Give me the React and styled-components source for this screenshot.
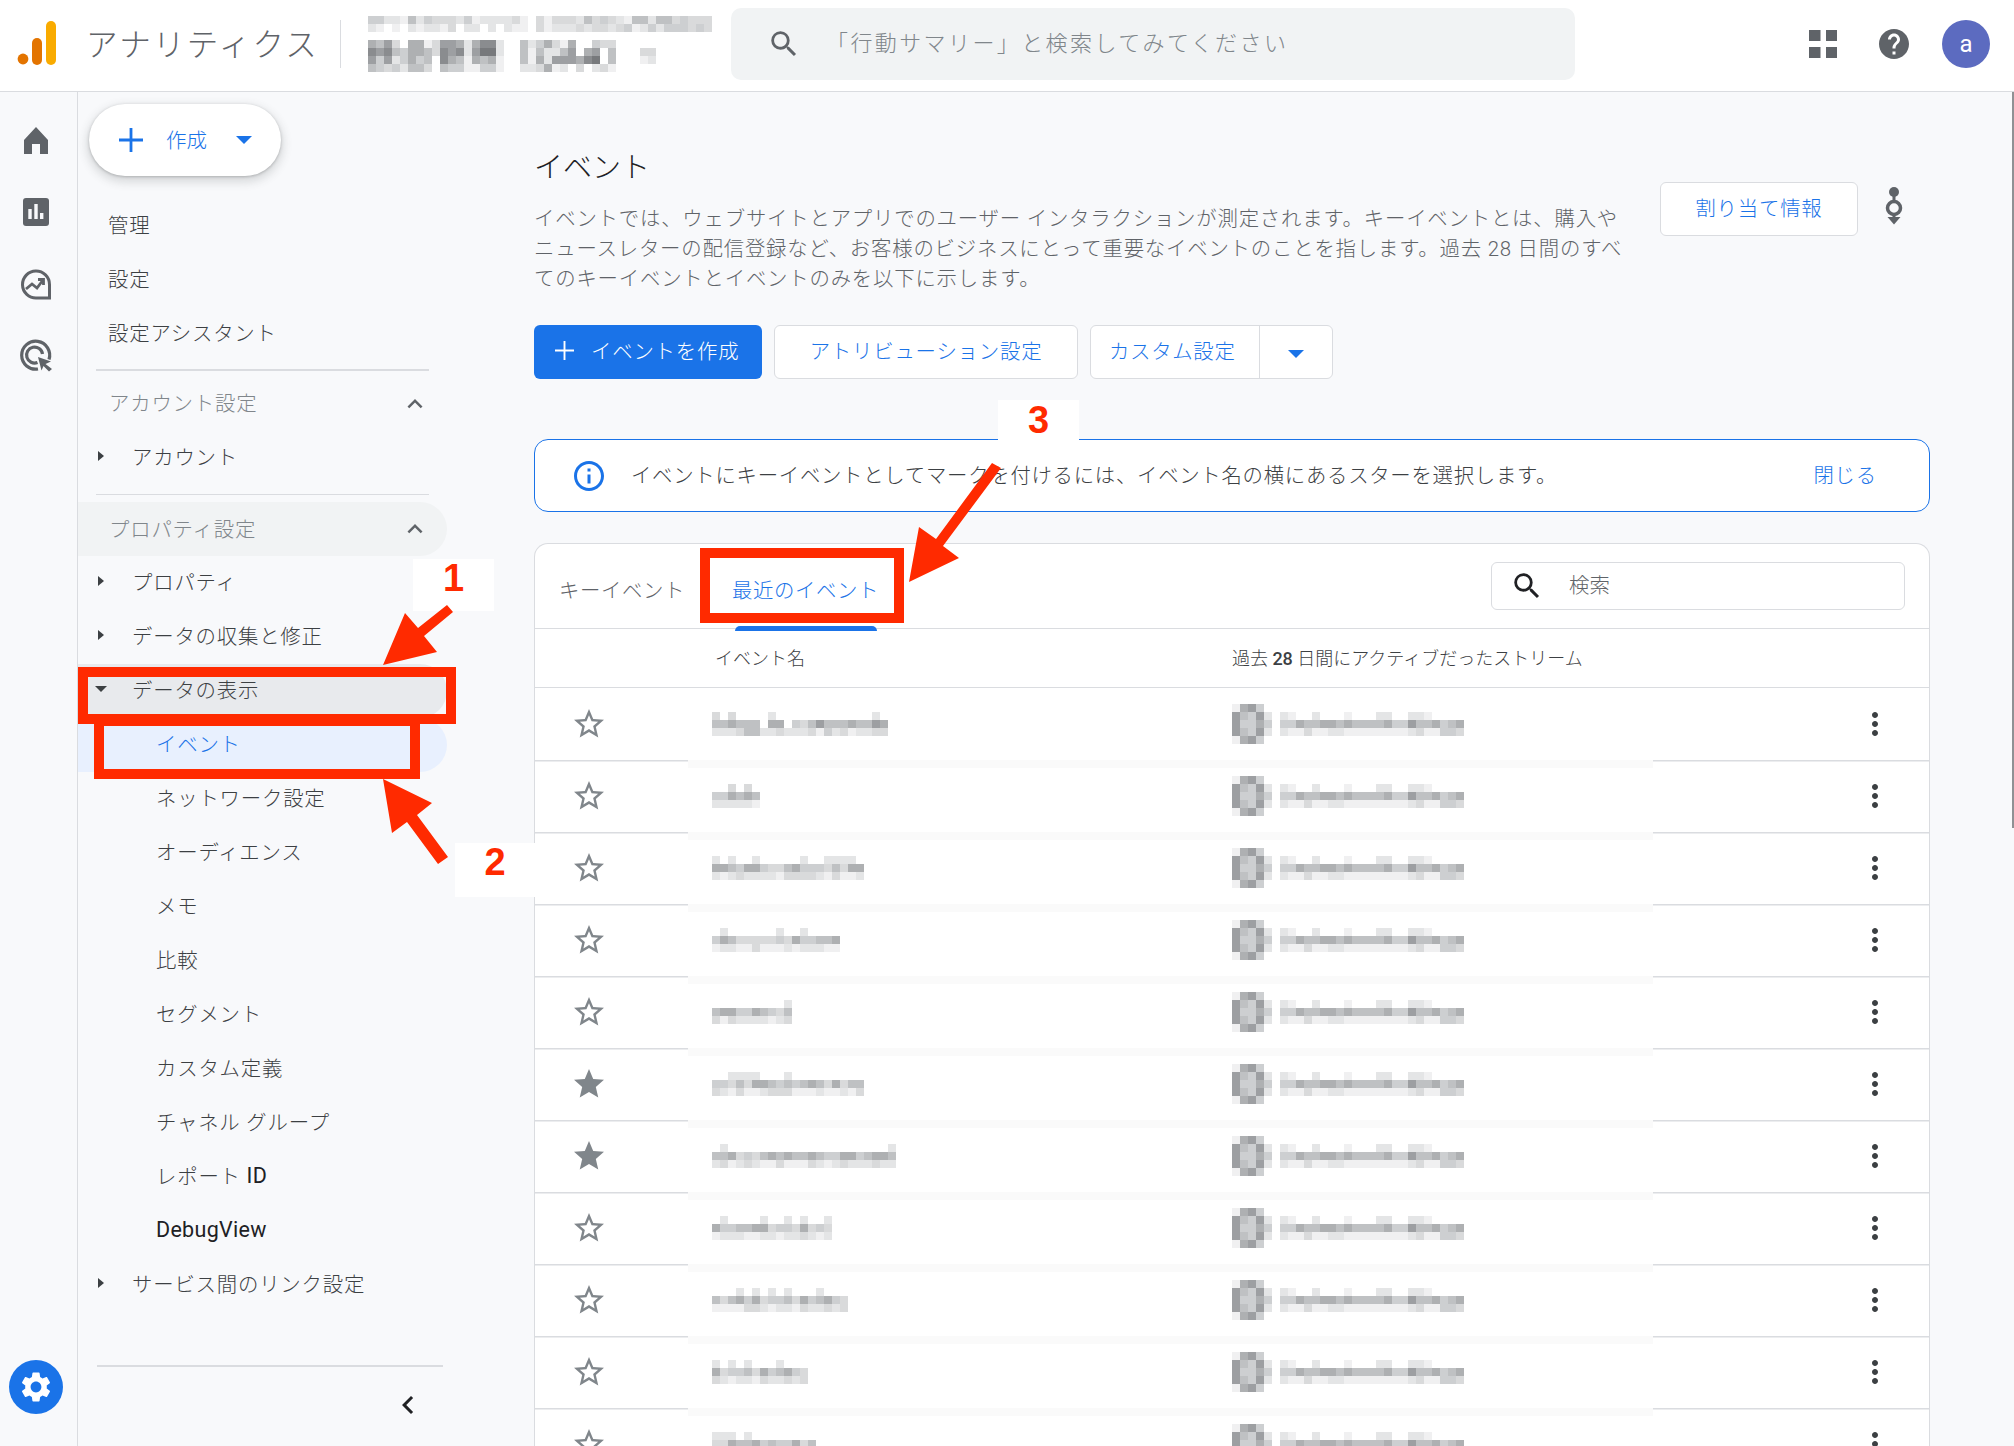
import React from "react";
import styled, { createGlobalStyle } from "styled-components";

const GlobalStyle = createGlobalStyle`
  html, body {
    margin: 0;
    padding: 0;
    background: #f8f9fb;
  }
  body {
    font-family: Roboto, "Noto Sans CJK JP", sans-serif;
    font-weight: 300;
    color: #3c4043;
  }
`;

const GREYS = ["#ffffff", "#f0f0f1", "#e4e5e6", "#d9dadb", "#cdcfd1", "#bfc1c3", "#aeb0b2", "#9d9fa2", "#8a8c8f", "#77797c"];

const Mosaic = ({ rows }) => (
  <MosaicSvg width={rows[0].length * 8} height={rows.length * 8} shapeRendering="crispEdges">
    {rows.map((row, y) =>
      row.split("").map((cell, x) => (
        <rect key={`${x}-${y}`} x={x * 8} y={y * 8} width="8" height="8" fill={GREYS[Number(cell)]} />
      ))
    )}
  </MosaicSvg>
);

const makeNameRows = (cols, seed) => {
  let n = seed;
  const next = () => {
    n = (n * 137 + 59) % 251;
    return n;
  };
  let top = "";
  let mid = "";
  let bottom = "";
  for (let i = 0; i < cols; i++) {
    top += next() % 5 === 0 ? "2" : "0";
    mid += String(3 + (next() % 4));
    bottom += String(1 + (next() % 3));
  }
  return [top, mid, bottom];
};

const STREAM_ROWS = ["21002000100022002210000", "44655665655556447556456", "21131122111111112311443"];
const STREAM_ICON = ["16740", "75472", "74464", "75472", "16740"];
const ACCOUNT_TOP = [
  "4422152433324122223103133325343215525534333",
  "2101021221302202021103122232332341242444343",
  "0000000000000000000000000000000000000000000",
];
const ACCOUNT_BOTTOM = [
  "657306613776268820052463160043300000000",
  "878546653878279920051522570670500033000",
  "747246450865165610051627776890500012000",
  "543425530544114410022361203023100000000",
];

const EVENTS = [
  { rows: ["3030000200000000000020", "5565550660435755565576", "2223552232223142312233"] },
  { rows: ["003030", "446565", "222221"] },
  { rows: makeNameRows(19, 11) },
  { rows: makeNameRows(16, 23) },
  { rows: makeNameRows(10, 37) },
  { rows: makeNameRows(19, 41), starred: true },
  { rows: makeNameRows(23, 53), starred: true },
  { rows: makeNameRows(15, 67) },
  { rows: makeNameRows(17, 71) },
  { rows: makeNameRows(12, 83) },
  { rows: makeNameRows(13, 97) },
];

const SearchPath = "M15.5 14h-.79l-.28-.27A6.471 6.471 0 0 0 16 9.5 6.5 6.5 0 1 0 9.5 16c1.61 0 3.09-.59 4.23-1.57l.27.28v.79l5 4.99L20.49 19l-4.99-5zm-6 0C7.01 14 5 11.99 5 9.5S7.01 5 9.5 5 14 7.01 14 9.5 11.99 14 9.5 14z";

const Icon = ({ size = 36, color = "#5f6368", d }) => (
  <svg width={size} height={size} viewBox="0 0 24 24" fill={color}>
    <path d={d} />
  </svg>
);

const Plus = ({ size, color, weight }) => (
  <svg width={size} height={size} viewBox="0 0 24 24" stroke={color} strokeWidth={weight}>
    <path d="M12 0v24M0 12h24" />
  </svg>
);

const RailIcon = ({ children }) => (
  <svg width="36" height="36" viewBox="0 0 36 36" fill="#5f6368">
    {children}
  </svg>
);

const App = () => {
  return (
    <Root>
      <GlobalStyle />
      <TopBar>
        <Logo width="40" height="46" viewBox="0 0 40 46">
          <circle cx="7" cy="38" r="5.4" fill="#e37400" />
          <rect x="16" y="17" width="10" height="27" rx="5" fill="#e37400" />
          <rect x="30" y="0" width="10" height="44" rx="5" fill="#f9ab00" />
        </Logo>
        <ProductName>アナリティクス</ProductName>
        <TopDivider />
        <AccountBlock>
          <Mosaic rows={ACCOUNT_TOP} />
          <Mosaic rows={ACCOUNT_BOTTOM} />
        </AccountBlock>
        <TopSearch>
          <Icon size={34} d={SearchPath} />
          <TopSearchText>「行動サマリー」と検索してみてください</TopSearchText>
        </TopSearch>
        <TopActions>
          <AppsGlyph width="36" height="36" viewBox="0 0 36 36" fill="#5f6368">
            <rect x="4" y="4" width="11.500" height="11" />
            <rect x="21" y="4" width="11" height="11" />
            <rect x="4" y="21" width="11.500" height="11" />
            <rect x="21" y="21" width="11" height="11" />
          </AppsGlyph>
          <Icon d="M12 2C6.48 2 2 6.48 2 12s4.48 10 10 10 10-4.48 10-10S17.52 2 12 2zm1 17h-2v-2h2v2zm2.07-7.75l-.9.92C13.45 12.9 13 13.5 13 15h-2v-.5c0-1.1.45-2.1 1.17-2.83l1.24-1.26c.37-.36.59-.86.59-1.41 0-1.1-.9-2-2-2s-2 .9-2 2H8c0-2.21 1.79-4 4-4s4 1.79 4 4c0 .88-.36 1.68-.93 2.25z" />
          <Avatar>a</Avatar>
        </TopActions>
      </TopBar>

      <Body>
        <Rail>
          <RailSlot>
            <RailIcon>
              <path d="M18 5l12 13v14h-8V22h-8v10H6V18z" />
            </RailIcon>
          </RailSlot>
          <RailSlot>
            <RailIcon>
              <rect x="5" y="4" width="26" height="28" rx="3" />
              <rect x="10.3" y="15" width="3.4" height="10" fill="#f8f9fb" />
              <rect x="16.3" y="10" width="3.4" height="15" fill="#f8f9fb" />
              <rect x="22" y="19" width="3.4" height="6" fill="#f8f9fb" />
            </RailIcon>
          </RailSlot>
          <RailSlot>
            <RailIcon>
              <path d="M31.500 18.500V32H18.500A13.500 13.500 0 1 1 31.500 18.500z" fill="none" stroke="#5f6368" strokeWidth="3" />
              <path d="M8 23l6-5 5 4 6-8M20 13.500h5.500V19" fill="none" stroke="#5f6368" strokeWidth="2.800" />
            </RailIcon>
          </RailSlot>
          <RailSlot>
            <RailIcon>
              <path d="M31 21.500A14 14 0 1 0 20 31" fill="none" stroke="#5f6368" strokeWidth="3.200" />
              <path d="M24.500 16A8 8 0 1 0 19.500 24.500" fill="none" stroke="#5f6368" strokeWidth="3.200" />
              <path d="M20 19l13 4.500-5.500 2.500 6.500 5-3 2.500-5.500-5.500-2 4.500z" />
            </RailIcon>
          </RailSlot>
          <GearButton>
            <Icon size={36} color="#fff" d="M19.14 12.94c.04-.3.06-.61.06-.94 0-.32-.02-.64-.07-.94l2.03-1.58c.18-.14.23-.41.12-.61l-1.92-3.32c-.12-.22-.37-.29-.59-.22l-2.39.96c-.5-.38-1.03-.7-1.62-.94l-.36-2.54c-.04-.24-.24-.41-.48-.41h-3.84c-.24 0-.43.17-.47.41l-.36 2.54c-.59.24-1.13.57-1.62.94l-2.39-.96c-.22-.08-.47 0-.59.22L2.74 8.87c-.12.21-.08.47.12.61l2.03 1.58c-.05.3-.09.63-.09.94s.02.64.07.94l-2.03 1.58c-.18.14-.23.41-.12.61l1.92 3.32c.12.22.37.29.59.22l2.39-.96c.5.38 1.03.7 1.62.94l.36 2.54c.05.24.24.41.48.41h3.84c.24 0 .44-.17.47-.41l.36-2.54c.59-.24 1.13-.56 1.62-.94l2.39.96c.22.08.47 0 .59-.22l1.92-3.32c.12-.22.07-.47-.12-.61l-2.01-1.58zM12 15.6c-1.98 0-3.6-1.62-3.6-3.6s1.62-3.6 3.6-3.6 3.6 1.62 3.6 3.6-1.62 3.6-3.6 3.6z" />
          </GearButton>
        </Rail>

        <Sidebar>
          <CreateButton>
            <Plus size={24} color="#1a73e8" weight={2.8} />
            <CreateLabel>作成</CreateLabel>
            <BlueCaret />
          </CreateButton>

          <NavItem $indent={30}>管理</NavItem>
          <NavItem $indent={30}>設定</NavItem>
          <NavItem $indent={30}>設定アシスタント</NavItem>

          <NavDivider $top={8} $bottom={6} />
          <SectionHead>
            <SectionLabel>アカウント設定</SectionLabel>
            <Chevron size={30} />
          </SectionHead>
          <NavItem>
            <CaretSlot>
              <CaretRight />
            </CaretSlot>
            アカウント
          </NavItem>

          <NavDivider $top={9} $bottom={7} />
          <SectionHead $shaded>
            <SectionLabel>プロパティ設定</SectionLabel>
            <Chevron size={30} />
          </SectionHead>
          <NavItem>
            <CaretSlot>
              <CaretRight />
            </CaretSlot>
            プロパティ
          </NavItem>
          <NavItem>
            <CaretSlot>
              <CaretRight />
            </CaretSlot>
            データの収集と修正
          </NavItem>
          <NavItem $tone="open">
            <CaretSlot>
              <CaretDown />
            </CaretSlot>
            データの表示
          </NavItem>
          <NavItem $indent={78} $tone="active">イベント</NavItem>
          <NavItem $indent={78}>ネットワーク設定</NavItem>
          <NavItem $indent={78}>オーディエンス</NavItem>
          <NavItem $indent={78}>メモ</NavItem>
          <NavItem $indent={78}>比較</NavItem>
          <NavItem $indent={78}>セグメント</NavItem>
          <NavItem $indent={78}>カスタム定義</NavItem>
          <NavItem $indent={78}>チャネル グループ</NavItem>
          <NavItem $indent={78}>
            レポート <LatinStrong>ID</LatinStrong>
          </NavItem>
          <NavItem $indent={78}>
            <LatinStrong>DebugView</LatinStrong>
          </NavItem>
          <NavItem>
            <CaretSlot>
              <CaretRight />
            </CaretSlot>
            サービス間のリンク設定
          </NavItem>

          <FootDivider />
          <CollapseRow>
            <Icon color="#202124" d="M15.41 7.41L14 6l-6 6 6 6 1.41-1.41L10.83 12z" />
          </CollapseRow>
        </Sidebar>

        <Main>
          <Intro>
            <IntroText>
              <PageTitle>イベント</PageTitle>
              <Description>
                イベントでは、ウェブサイトとアプリでのユーザー インタラクションが測定されます。キーイベントとは、購入や
                <br />
                ニュースレターの配信登録など、お客様のビジネスにとって重要なイベントのことを指します。過去 28 日間のすべ
                <br />
                てのキーイベントとイベントのみを以下に示します。
              </Description>
            </IntroText>
            <IntroSide>
              <OutlineButton $width={198}>割り当て情報</OutlineButton>
              <svg width="36" height="44" viewBox="0 0 36 44" fill="#5f6368">
                <circle cx="18" cy="5" r="5" />
                <rect x="16.500" y="8" width="3" height="24" />
                <circle cx="18" cy="21" r="6.500" fill="#f8f9fb" stroke="#5f6368" strokeWidth="3.500" />
                <path d="M11.500 30h13L18 37.500z" />
              </svg>
            </IntroSide>
          </Intro>

          <ButtonRow>
            <PrimaryButton>
              <Plus size={19} color="#fff" weight={2.400} />
              イベントを作成
            </PrimaryButton>
            <OutlineButton $width={304}>アトリビューション設定</OutlineButton>
            <SplitButton>
              <SplitLabel>カスタム設定</SplitLabel>
              <SplitArrow>
                <BlueCaret />
              </SplitArrow>
            </SplitButton>
          </ButtonRow>

          <Notice>
            <Icon color="#1a73e8" d="M11 7h2v2h-2zm0 4h2v6h-2zm1-9C6.48 2 2 6.48 2 12s4.48 10 10 10 10-4.48 10-10S17.52 2 12 2zm0 18c-4.41 0-8-3.59-8-8s3.59-8 8-8 8 3.59 8 8-3.59 8-8 8z" />
            <NoticeText>イベントにキーイベントとしてマークを付けるには、イベント名の横にあるスターを選択します。</NoticeText>
            <NoticeLink>閉じる</NoticeLink>
          </Notice>

          <Card>
            <TabBar>
              <Tab>キーイベント</Tab>
              <Tab $active>最近のイベント</Tab>
              <TableSearch>
                <Icon size={34} color="#202124" d={SearchPath} />
                <TableSearchText>検索</TableSearchText>
              </TableSearch>
            </TabBar>
            <TableHead>
              <HeadName>イベント名</HeadName>
              <HeadStream>
                過去 <b>28</b> 日間にアクティブだったストリーム
              </HeadStream>
            </TableHead>
            {EVENTS.map((event, index) => (
              <EventRow key={index}>
                <StarCell $line={index > 0}>
                  <Icon
                    color="#80868b"
                    d={
                      event.starred
                        ? "M12 17.27 18.18 21l-1.64-7.03L22 9.24l-7.19-.61L12 2 9.19 8.63 2 9.24l5.46 4.73L5.82 21z"
                        : "M22 9.24l-7.19-.62L12 2 9.19 8.63 2 9.24l5.46 4.73L5.82 21 12 17.27 18.18 21l-1.63-7.03L22 9.24zM12 15.4l-3.76 2.27 1-4.28-3.32-2.88 4.38-.38L12 6.1l1.71 4.04 4.38.38-3.32 2.88 1 4.28L12 15.4z"
                    }
                  />
                </StarCell>
                <DataCell $band={index > 0}>
                  <NameSlot>
                    <Mosaic rows={event.rows} />
                  </NameSlot>
                  <Mosaic rows={STREAM_ICON} />
                  <Mosaic rows={STREAM_ROWS} />
                </DataCell>
                <MenuCell $line={index > 0}>
                  <Icon color="#3c4043" d="M12 8c1.1 0 2-.9 2-2s-.9-2-2-2-2 .9-2 2 .9 2 2 2zm0 2c-1.1 0-2 .9-2 2s.9 2 2 2 2-.9 2-2-.9-2-2-2zm0 6c-1.1 0-2 .9-2 2s.9 2 2 2 2-.9 2-2-.9-2-2-2z" />
                </MenuCell>
              </EventRow>
            ))}
          </Card>
        </Main>
      </Body>

      <ScrollThumb />

      {/* red annotations drawn over the screenshot */}
      <CalloutLabel $x={413} $y={559} $w={81} $h={52}>1</CalloutLabel>
      <CalloutLabel $x={455} $y={843} $w={80} $h={54}>2</CalloutLabel>
      <CalloutLabel $x={998} $y={400} $w={81} $h={41} $pad={1}>3</CalloutLabel>
      <RedFrame $x={94} $y={716} $w={326} $h={63} />
      <RedFrame $x={78} $y={667} $w={378} $h={57} />
      <RedFrame $x={700} $y={548} $w={204} $h={75} />
      <ArrowLayer width="2014" height="1446" viewBox="0 0 2014 1446" fill="#ff2a00">
        <polygon points="447,605 453,612 424,636 437,652 383,665 405,613 418,628" />
        <polygon points="448,857 438,864 407,822 392,833 383,779 432,803 417,815" />
        <polygon points="992,463 1001,468 943,546 959,558 909,582 919,527 936,539" />
      </ArrowLayer>
    </Root>
  );
};

const Chevron = ({ size }) => <Icon size={size} d="M12 8l-6 6 1.41 1.41L12 10.83l4.59 4.58L18 14z" />;

const Root = styled.div`
  position: relative;
  width: 2014px;
  height: 1446px;
  overflow: hidden;
  background: #f8f9fb;
`;

const TopBar = styled.header`
  display: flex;
  align-items: center;
  box-sizing: border-box;
  height: 92px;
  padding: 0 0 3.500px 16px;
  background: #fff;
  border-bottom: 1.5px solid #dadce0;
`;

const Logo = styled.svg`
  flex: none;
  margin-right: 30px;
`;

const ProductName = styled.div`
  width: 254px;
  padding-bottom: 3px;
  font-size: 31.500px;
  letter-spacing: 2.300px;
  color: #5f6368;
  white-space: nowrap;
`;

const TopDivider = styled.div`
  width: 1px;
  height: 48px;
  background: #dadce0;
`;

const AccountBlock = styled.div`
  display: flex;
  flex-direction: column;
  width: 363px;
  margin-left: 27px;
  gap: 0;
`;

const MosaicSvg = styled.svg`
  display: block;
  flex: none;
`;

const TopSearch = styled.div`
  display: flex;
  align-items: center;
  box-sizing: border-box;
  width: 844px;
  height: 72px;
  padding-left: 36px;
  background: #f1f3f4;
  border-radius: 10px;
`;

const TopSearchText = styled.span`
  margin-left: 25px;
  padding-bottom: 6px;
  font-size: 22px;
  letter-spacing: 2.400px;
  color: #80868b;
`;

const TopActions = styled.div`
  display: flex;
  align-items: center;
  gap: 30px;
  margin-left: auto;
  padding-right: 24px;
`;

const AppsGlyph = styled.svg`
  margin-right: 5px;
`;

const Avatar = styled.div`
  display: flex;
  align-items: center;
  justify-content: center;
  width: 48px;
  height: 48px;
  border-radius: 50%;
  background: #5c6bc0;
  color: #fff;
  font-size: 24px;
  font-weight: 400;
`;

const Body = styled.div`
  display: flex;
  height: 1354px;
`;

const Rail = styled.nav`
  display: flex;
  flex-direction: column;
  align-items: center;
  flex: none;
  box-sizing: border-box;
  width: 78px;
  padding: 12px 6px 32px 0;
  border-right: 1.5px solid #dadce0;
`;

const RailSlot = styled.div`
  display: flex;
  align-items: center;
  justify-content: center;
  height: 72px;
`;

const GearButton = styled.div`
  display: flex;
  align-items: center;
  justify-content: center;
  width: 54px;
  height: 54px;
  margin-top: auto;
  border-radius: 50%;
  background: #1a73e8;
`;

const Sidebar = styled.aside`
  flex: none;
  width: 456px;
`;

const CreateButton = styled.button`
  display: flex;
  align-items: center;
  box-sizing: border-box;
  width: 192px;
  height: 72px;
  margin: 12px 0 23px 11px;
  padding: 0 0 0 30px;
  border: none;
  border-radius: 36px;
  background: #fff;
  box-shadow: 0 4px 8px 3px rgba(60, 64, 67, 0.15), 0 1px 3px rgba(60, 64, 67, 0.3);
  font-family: inherit;
  font-weight: 300;
`;

const CreateLabel = styled.span`
  margin: 0 29px 3px 23px;
  font-size: 20.500px;
  color: #1a73e8;
`;

const BlueCaret = styled.i`
  display: block;
  border-left: 8px solid transparent;
  border-right: 8px solid transparent;
  border-top: 8px solid #1a73e8;
`;

const NavItem = styled.div`
  display: flex;
  align-items: center;
  box-sizing: border-box;
  width: 369px;
  height: 54px;
  padding-left: ${(p) => p.$indent || 0}px;
  padding-bottom: 4px;
  border-radius: 0 27px 27px 0;
  font-size: 20.400px;
  letter-spacing: 0.8px;
  white-space: pre;
  color: ${(p) => (p.$tone === "active" ? "#1a73e8" : "#3c4043")};
  background: ${(p) =>
    p.$tone === "active" ? "#e8f0fe" : p.$tone === "open" ? "#e8eaed" : "transparent"};
`;

const LatinStrong = styled.span`
  font-size: 21.500px;
  font-weight: 400;
  letter-spacing: 0.3px;
  color: #202124;
`;

const CaretSlot = styled.span`
  display: flex;
  justify-content: center;
  flex: none;
  width: 46px;
  margin-right: 8px;
`;

const CaretRight = styled.i`
  display: block;
  border-top: 5.5px solid transparent;
  border-bottom: 5.5px solid transparent;
  border-left: 6px solid #3c4043;
`;

const CaretDown = styled.i`
  display: block;
  border-left: 6px solid transparent;
  border-right: 6px solid transparent;
  border-top: 6px solid #3c4043;
`;

const NavDivider = styled.div`
  width: 333px;
  height: 1.5px;
  margin: ${(p) => p.$top}px 0 ${(p) => p.$bottom}px 18px;
  background: #dadce0;
`;

const SectionHead = styled.div`
  display: flex;
  align-items: center;
  justify-content: space-between;
  box-sizing: border-box;
  width: 369px;
  height: 54px;
  padding: 0 17px 0 31px;
  border-radius: 0 27px 27px 0;
  font-size: 20.400px;
  letter-spacing: 0.8px;
  color: #80868b;
  background: ${(p) => (p.$shaded ? "#f1f3f4" : "transparent")};
`;

const SectionLabel = styled.span`
  padding-bottom: 3px;
`;

const FootDivider = styled.div`
  width: 346px;
  height: 1.5px;
  margin: 53px 0 0 19px;
  background: #dadce0;
`;

const CollapseRow = styled.div`
  display: flex;
  justify-content: flex-end;
  width: 348px;
  margin-top: 20px;
`;

const Main = styled.main`
  flex: none;
  width: 1396px;
  padding-top: 58px;
`;

const Intro = styled.section`
  display: flex;
`;

const IntroText = styled.div`
  width: 1126px;
`;

const PageTitle = styled.h1`
  margin: 0 0 18px;
  font-size: 29px;
  line-height: 36px;
  font-weight: 300;
  color: #202124;
`;

const Description = styled.p`
  margin: 0;
  font-size: 20.400px;
  line-height: 30px;
  letter-spacing: 0.8px;
  white-space: nowrap;
  color: #5f6368;
`;

const IntroSide = styled.div`
  display: flex;
  align-items: center;
  gap: 18px;
  height: 54px;
  margin-top: 32px;
`;

const OutlineButton = styled.button`
  flex: none;
  box-sizing: border-box;
  width: ${(p) => p.$width}px;
  height: 54px;
  padding: 0 0 5px;
  border: 1.5px solid #dadce0;
  border-radius: 6px;
  background: #fff;
  font-family: inherit;
  font-weight: 300;
  font-size: 20.400px;
  letter-spacing: 0.8px;
  color: #1a73e8;
`;

const ButtonRow = styled.div`
  display: flex;
  gap: 12px;
  margin-top: 31px;
`;

const PrimaryButton = styled.button`
  display: flex;
  align-items: center;
  gap: 17px;
  box-sizing: border-box;
  width: 228px;
  height: 54px;
  padding: 0 0 4px 21px;
  border: none;
  border-radius: 6px;
  background: #1a73e8;
  font-family: inherit;
  font-weight: 300;
  font-size: 20.400px;
  letter-spacing: 0.8px;
  color: #fff;
`;

const SplitButton = styled.div`
  display: flex;
  box-sizing: border-box;
  width: 243px;
  height: 54px;
  border: 1.5px solid #dadce0;
  border-radius: 6px;
  background: #fff;
`;

const SplitLabel = styled.span`
  display: flex;
  align-items: center;
  box-sizing: border-box;
  width: 169px;
  padding: 0 0 5px 18px;
  border-right: 1px solid #dadce0;
  font-size: 20.400px;
  letter-spacing: 0.7px;
  color: #1a73e8;
`;

const SplitArrow = styled.span`
  display: flex;
  flex: 1;
  align-items: center;
  justify-content: center;
  padding-top: 4px;
`;

const Notice = styled.div`
  display: flex;
  align-items: center;
  box-sizing: border-box;
  height: 73px;
  margin-top: 60px;
  padding: 0 52px 0 36px;
  border: 1.5px solid #1a73e8;
  border-radius: 14px;
  background: #fff;
`;

const NoticeText = styled.span`
  margin: 0 0 4px 24px;
  font-size: 20.400px;
  letter-spacing: 0.72px;
  color: #3c4043;
`;

const NoticeLink = styled.span`
  margin: 0 0 4px auto;
  font-size: 20.400px;
  letter-spacing: 0.8px;
  color: #1a73e8;
`;

const Card = styled.section`
  margin-top: 31px;
  border: 1.5px solid #dadce0;
  border-bottom: none;
  border-radius: 14px 14px 0 0;
  background: #fff;
`;

const TabBar = styled.div`
  display: flex;
  align-items: center;
  box-sizing: border-box;
  height: 85px;
  padding: 0 24px 0 24px;
  gap: 47px;
  border-bottom: 1.5px solid #dadce0;
`;

const Tab = styled.div`
  position: relative;
  padding-top: 6px;
  font-size: 20.400px;
  letter-spacing: 0.6px;
  color: ${(p) => (p.$active ? "#1a73e8" : "#5f6368")};

  ${(p) =>
    p.$active &&
    `&::after {
      content: "";
      position: absolute;
      left: 3px;
      right: 2px;
      bottom: -26.500px;
      height: 5px;
      border-radius: 5px 5px 0 0;
      background: #1a73e8;
    }`}
`;

const TableSearch = styled.div`
  display: flex;
  align-items: center;
  box-sizing: border-box;
  width: 414px;
  height: 48px;
  margin-left: auto;
  padding-left: 18px;
  border: 1.5px solid #dadce0;
  border-radius: 6px;
`;

const TableSearchText = styled.span`
  margin: 0 0 4px 25px;
  font-size: 20.400px;
  color: #5f6368;
`;

const TableHead = styled.div`
  display: flex;
  align-items: center;
  box-sizing: border-box;
  height: 59px;
  padding: 0 0 2px 180px;
  border-bottom: 1.5px solid #dadce0;
  font-size: 18px;
  color: #3c4043;
`;

const HeadName = styled.span`
  width: 517px;
`;

const HeadStream = styled.span`
  b {
    font-weight: 500;
  }
`;

const EventRow = styled.div`
  display: flex;
  height: 72px;
`;

const StarCell = styled.div`
  display: flex;
  align-items: center;
  flex: none;
  box-sizing: border-box;
  width: 153px;
  padding-left: 36px;
  box-shadow: ${(p) => (p.$line ? "inset 0 1.5px 0 #dadce0" : "none")};
`;

const DataCell = styled.div`
  display: flex;
  align-items: center;
  gap: 8px;
  flex: none;
  width: 965px;
  box-shadow: ${(p) => (p.$band ? "inset 0 8px 0 #fafafa" : "none")};
`;

const NameSlot = styled.div`
  flex: none;
  box-sizing: border-box;
  width: 536px;
  padding-left: 24px;
`;

const MenuCell = styled.div`
  display: flex;
  align-items: center;
  flex: 1;
  padding-left: 204px;
  box-shadow: ${(p) => (p.$line ? "inset 0 1.5px 0 #dadce0" : "none")};
`;

const ScrollThumb = styled.div`
  position: absolute;
  top: 92px;
  right: 0;
  width: 2px;
  height: 736px;
  background: #8f9194;
`;

const CalloutLabel = styled.div`
  position: absolute;
  left: ${(p) => p.$x}px;
  top: ${(p) => p.$y}px;
  display: flex;
  align-items: flex-start;
  justify-content: center;
  box-sizing: border-box;
  width: ${(p) => p.$w}px;
  height: ${(p) => p.$h}px;
  padding-top: ${(p) => p.$pad || 0}px;
  background: #fff;
  font-family: "Liberation Sans", Arial, sans-serif;
  font-weight: 700;
  font-size: 38px;
  line-height: 38px;
  color: #ff2a00;
`;

const RedFrame = styled.div`
  position: absolute;
  left: ${(p) => p.$x}px;
  top: ${(p) => p.$y}px;
  box-sizing: border-box;
  width: ${(p) => p.$w}px;
  height: ${(p) => p.$h}px;
  border: 10px solid #ff2a00;
`;

const ArrowLayer = styled.svg`
  position: absolute;
  left: 0;
  top: 0;
  pointer-events: none;
`;

export default App;
